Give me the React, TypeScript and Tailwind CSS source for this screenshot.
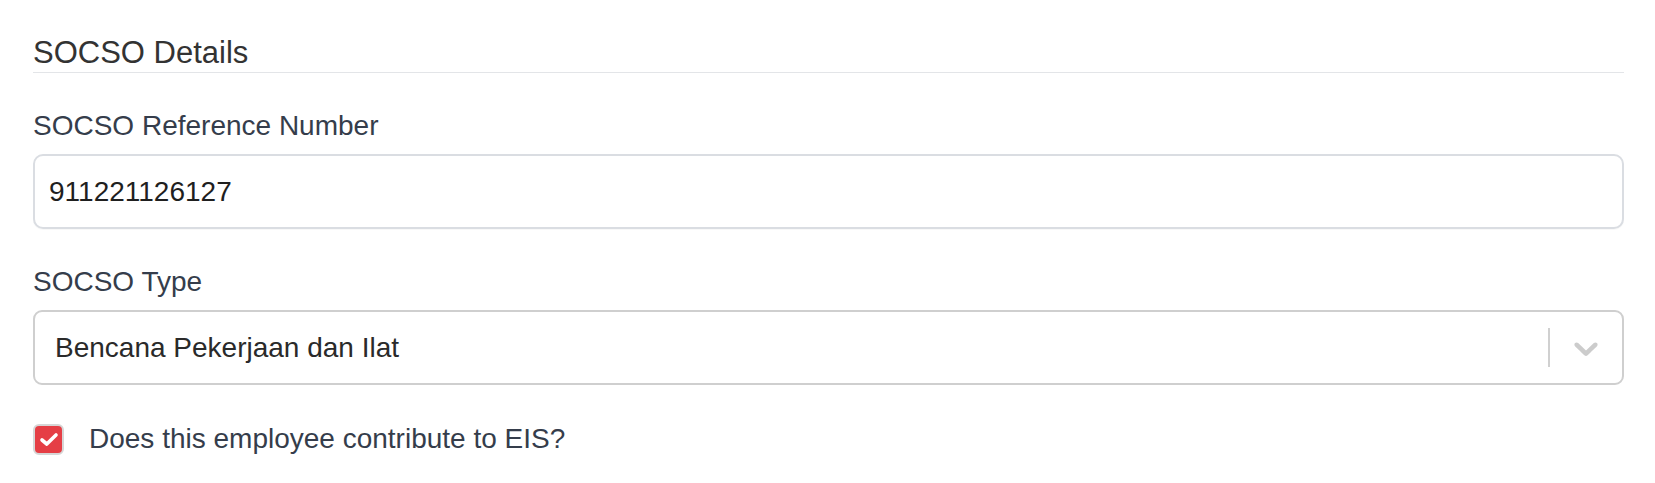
export default function App() {
  return (
    <div className="min-h-screen w-full bg-white pl-[33px] pr-[31px] font-['Liberation_Sans',Arial,sans-serif]">
      <div className="border-b border-[#e3e5e8] pb-[1px] pt-[34px]">
        <h2 className="text-[31px] leading-[37px] font-normal text-[#333333]">SOCSO Details</h2>
      </div>

      <div className="mt-[36px]">
        <label className="block text-[28px] leading-[34px] text-[#353d4b]">SOCSO Reference Number</label>
        <div className="mt-[11px] flex h-[75px] items-center rounded-[10px] border-2 border-[#dadde2] bg-white px-[14px] shadow-[0_1px_1px_rgba(0,0,0,0.03)]">
          <span className="text-[28px] text-[#1f1f1f]">911221126127</span>
        </div>
      </div>

      <div className="mt-[36px]">
        <label className="block text-[28px] leading-[34px] text-[#353d4b]">SOCSO Type</label>
        <div className="mt-[11px] flex h-[75px] items-center rounded-[9px] border-2 border-[#cfcfcf] bg-white">
          <div className="flex-1 pl-[20px] text-[28px] text-[#2a2a2a]">Bencana Pekerjaan dan Ilat</div>
          <div className="h-[39px] w-[2px] bg-[#d0d0d0]" />
          <div className="flex w-[72px] items-center justify-center">
            <svg width="40" height="40" viewBox="0 0 20 20" fill="#cccccc">
              <path d="M4.516 7.548c0.436-0.446 1.043-0.481 1.576 0l3.908 3.747 3.908-3.747c0.533-0.481 1.141-0.446 1.574 0 0.436 0.445 0.408 1.197 0 1.615-0.406 0.418-4.695 4.502-4.695 4.502-0.217 0.223-0.502 0.335-0.787 0.335s-0.57-0.112-0.789-0.335c0 0-4.287-4.084-4.695-4.502s-0.436-1.17 0-1.615z" />
            </svg>
          </div>
        </div>
      </div>

      <div className="mt-[33px] flex items-center">
        <div className="flex h-[31px] w-[31px] items-center justify-center rounded-[6px] border-2 border-[#d6d6d6] bg-[#e53e45]">
          <svg width="20" height="15" viewBox="0 0 20 15" fill="none">
            <path d="M3 8 L7.8 12 L17 3" stroke="white" strokeWidth="3.6" strokeLinecap="round" strokeLinejoin="round" />
          </svg>
        </div>
        <span className="ml-[25px] text-[28px] text-[#353d4b]">Does this employee contribute to EIS?</span>
      </div>
    </div>
  );
}
